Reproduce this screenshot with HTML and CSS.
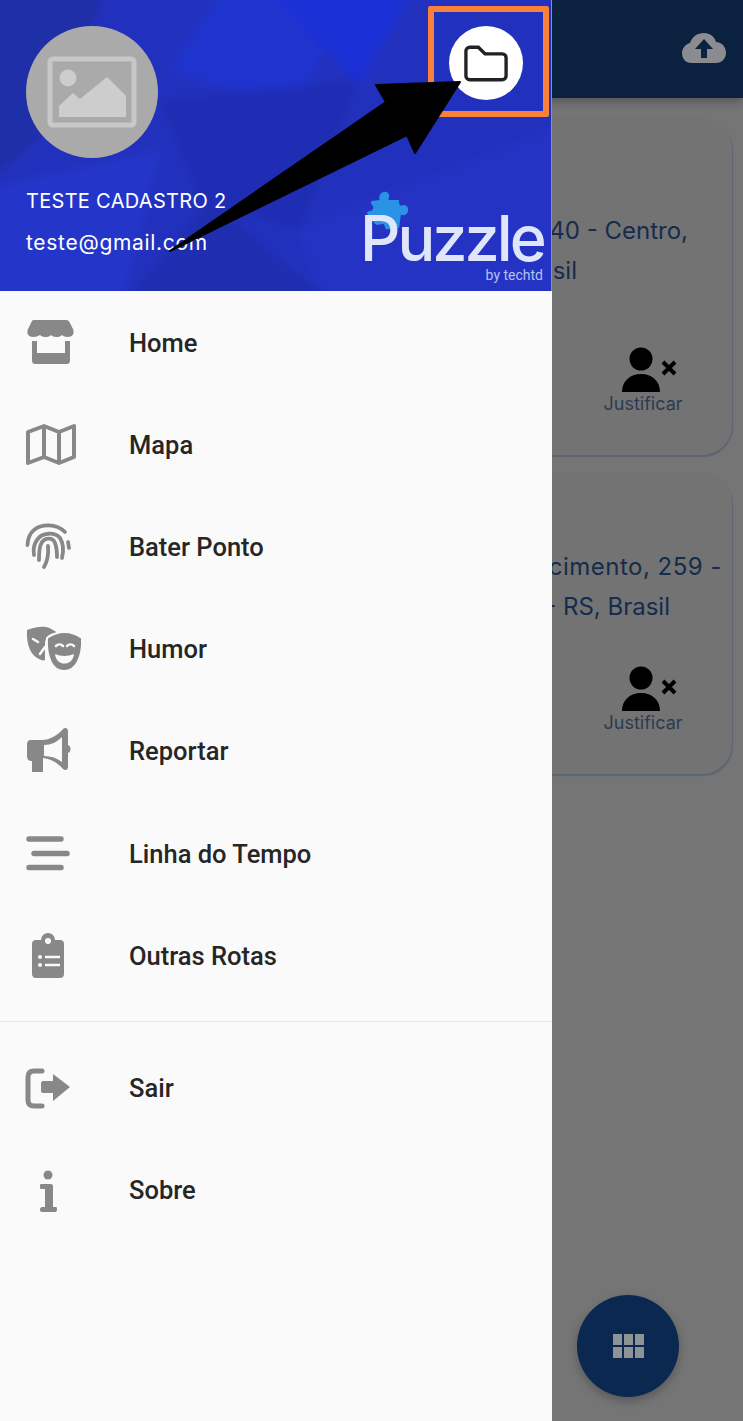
FILE: index.html
```html
<!DOCTYPE html>
<html lang="pt-BR">
<head>
    <meta charset="UTF-8">
    <meta name="viewport" content="width=device-width, initial-scale=1.0">
    <title>Puzzle</title>
    <link rel="stylesheet" href="styles.css">
</head>
<body>
    <div class="app">
        <div class="appbar">
            <svg class="cloud" viewBox="0 0 44 30">
                <path d="M22 0c6 0 11 4 12 9 6 0 10 5 10 11 0 5-4 10-10 10H9c-5 0-9-4-9-10 0-5 4-9 8-10C10 4 15 0 22 0z" fill="#8a8c8f"/>
                <path d="M22 6l9 10h-6v9h-6v-9h-6z" fill="#0a2140"/>
            </svg>
        </div>

        <div class="card card-first">
            <div class="address">
                <div class="line line-a">40 - Centro,</div>
                <div class="line line-b">sil</div>
            </div>
            <div class="justify">
                <svg class="justify-icon" viewBox="0 0 76 46">
                    <circle cx="36" cy="12" r="11.500"/>
                    <path d="M17 45c0-11 8-18 19-18s19 7 19 18z"/>
                    <path d="M58 15l12 12M70 15L58 27" class="cross"/>
                </svg>
                <span>Justificar</span>
            </div>
        </div>

        <div class="card card-second">
            <div class="address">
                <div class="line line-c">cimento, 259 -</div>
                <div class="line line-d">- RS, Brasil</div>
            </div>
            <div class="justify">
                <svg class="justify-icon" viewBox="0 0 76 46">
                    <circle cx="36" cy="12" r="11.500"/>
                    <path d="M17 45c0-11 8-18 19-18s19 7 19 18z"/>
                    <path d="M58 15l12 12M70 15L58 27" class="cross"/>
                </svg>
                <span>Justificar</span>
            </div>
        </div>

        <div class="fab">
            <div class="fab-grid">
                <i></i><i></i><i></i><i></i><i></i><i></i>
            </div>
        </div>
    </div>

    <div class="drawer">
        <div class="drawer-header">
            <svg class="header-bg" viewBox="-12 -12 576 315" preserveAspectRatio="none">
                <rect x="-20" y="-20" width="600" height="330" fill="#2231bd"/>
                <polygon points="-20,-20 110,-20 60,120 -20,190" fill="#1f2fa8"/>
                <polygon points="230,-20 350,-20 300,110 170,70" fill="#1f34cf"/>
                <polygon points="260,-20 420,-20 360,85" fill="#1b2fd6"/>
                <polygon points="160,100 360,80 300,230 200,200" fill="#1f2db4"/>
                <polygon points="-20,190 160,150 120,310 -20,310" fill="#2436c9"/>
                <polygon points="300,230 580,120 580,310 330,310" fill="#2433c4"/>
                <polygon points="120,310 210,200 340,310" fill="#1f2db0"/>
            </svg>
            <div class="profile">
                <div class="avatar">
                    <svg class="avatar-img" viewBox="0 0 90 72">
                        <rect x="3" y="3" width="84" height="66" rx="3" fill="none" stroke="#c8c8c8" stroke-width="5"/>
                        <circle cx="21" cy="22" r="8.500" fill="#cdcdcd"/>
                        <path d="M12 61V50l14-13 7 6 27-22 19 19v21z" fill="#cdcdcd"/>
                    </svg>
                </div>
                <div class="user-name">TESTE CADASTRO 2</div>
                <div class="user-mail">teste@gmail.com</div>
            </div>
            <div class="header-right">
                <div class="highlight">
                    <div class="folder-btn">
                        <svg class="folder" viewBox="0 0 46 38">
                            <path d="M2 6a4 4 0 0 1 4-4h9l7 7h18a4 4 0 0 1 4 4v19a4 4 0 0 1-4 4H6a4 4 0 0 1-4-4z"/>
                        </svg>
                    </div>
                </div>
                <div class="logo">
                    <svg class="logo-piece" viewBox="0 0 50 50">
                        <path d="M16 12c-3-8 8-12 10-6 1 3-1 4 0 6h11c0 4 0 6 3 6 6-3 10 6 4 10-2 1-4 0-5 0l-2 14-14 2c-2-3-1-6-4-6-3 0-5 2-8 0L2 26c2-3 6-1 7-5 1-3-4-4-2-8z" fill="#2b93e6"/>
                    </svg>
                    <div class="logo-name">Puzzle</div>
                    <div class="logo-by">by techtd</div>
                </div>
            </div>
        </div>

        <div class="menu">
            <div class="menu-item">
                <svg class="menu-icon" viewBox="0 0 56 56">
                    <path d="M12 5H44C46 5 47 6 48 8L51 14C53 19 50 22 46 22C43 22 41 21 40 20C38 22 36 22 34 22C32 22 30 21 29 20C27 22 25 22 23 22C21 22 19 21 18 20C16 21 14 22 11 22C7 22 4 19 6 14L9 8C10 6 10 5 12 5Z"/>
                    <path d="M10 26h5v12h28V26h5v19c0 3-1 4-4 4H14c-3 0-4-1-4-4z"/>
                </svg>
                <span>Home</span>
            </div>
            <div class="menu-item">
                <svg class="menu-icon" viewBox="0 0 56 56">
                    <path class="outline" d="M6 15l16-6 15 6 15-6v31l-15 6-15-6-16 6zM22 9v31M37 15v31"/>
                </svg>
                <span>Mapa</span>
            </div>
            <div class="menu-item">
                <svg class="menu-icon" viewBox="0 0 56 56">
                    <g class="thin">
                        <path d="M5.500 26C6 18 8 14 12 11 19 5 34 4 43 13"/>
                        <path d="M12 36C11 30 12 25 15 21 20 13 33 13 38 19 41 24 42 31 40 39"/>
                        <path d="M17 41C17 34 17 29 19 25 22 18 31 18 33 24 35 29 35 33 35 38"/>
                        <path d="M22 48C25 43 27 38 26 27"/>
                        <path d="M46 23l1 6"/>
                    </g>
                </svg>
                <span>Bater Ponto</span>
            </div>
            <div class="menu-item">
                <svg class="menu-icon" viewBox="0 0 56 56">
                    <path d="M5 9C11 7 18 5 24 6 29 7 33 10 35 12 28 12 24 15 23 21V39C21 40 19 39 17 38 10 35 4 26 5 9Z"/>
                    <path class="mask-front" d="M25 17C36 9 49 9 60 17 61 36 54 50 42 50S24 36 25 17Z"/>
                    <path class="face" d="M34 25c2-2 5-2 7 0M45 25c2-2 5-2 7 0"/>
                    <path d="M33 33c6 2.500 13 2.500 19 0-1 7-5 9.500-9.500 9.500S34 40 33 33z" fill="#fafafa"/>
                    <path class="face" d="M11 18l5 3M18 33l5-7"/>
                </svg>
                <span>Humor</span>
            </div>
            <div class="menu-item">
                <svg class="menu-icon" viewBox="0 0 56 56">
                    <path d="M9 17H20C28 17 36 12 41 6C43 4 46 5 46 8V22C48 23 48.500 24 48.500 26S48 29 46 30V44C46 47 43 48 41 46C36 40 29 36 21 35V49H10V38H9C6 38 5 35 5 33V22C5 19 6 17 9 17Z"/>
                    <path d="M22 22C29 22 35 19 40 14V39C35 35 29 33 22 33Z" fill="#fafafa"/>
                </svg>
                <span>Reportar</span>
            </div>
            <div class="menu-item">
                <svg class="menu-icon" viewBox="0 0 56 56">
                    <path class="bars" d="M7 13h32M12 27.500h33M7 41.500h32"/>
                </svg>
                <span>Linha do Tempo</span>
            </div>
            <div class="menu-item">
                <svg class="menu-icon" viewBox="0 0 56 56">
                    <path d="M14 12h5a7 7 0 0 1 14 0h5c3 0 4 2 4 4v30c0 3-2 4-4 4H14c-3 0-4-2-4-4V16c0-2 1-4 4-4z"/>
                    <circle cx="26" cy="13" r="3" fill="#fafafa"/>
                    <path class="list" d="M23 29h15M23 37h15"/>
                    <circle cx="18" cy="29" r="2" fill="#fafafa"/>
                    <circle cx="18" cy="37" r="2" fill="#fafafa"/>
                </svg>
                <span>Outras Rotas</span>
            </div>

            <div class="divider"></div>

            <div class="menu-item">
                <svg class="menu-icon" viewBox="0 0 56 56">
                    <path class="bracket" d="M20 11h-8c-4 0-6 2-6 6v23c0 4 2 6 6 6h8"/>
                    <path d="M21 21h10v-7l17 13-17 14v-8H21c-1 0-2-1-2-2v-8c0-1 1-2 2-2z"/>
                </svg>
                <span>Sair</span>
            </div>
            <div class="menu-item">
                <svg class="menu-icon" viewBox="0 0 56 56">
                    <circle cx="26" cy="13" r="4.500"/>
                    <path d="M19 22h10c1 0 2 1 2 2v21h3c1 0 1 1 1 2v1c0 1-1 2-2 2H20c-1 0-2-1-2-2v-1c0-1 1-2 2-2h3V27h-4c-1 0-1-1-1-2v-1c0-1 0-2 1-2z"/>
                </svg>
                <span>Sobre</span>
            </div>
        </div>
    </div>

    <svg class="arrow" viewBox="0 0 743 300">
        <path d="M170 251L386 102 376 85 460 82 415 153 407 135z" fill="#000" stroke="#000" stroke-width="2" stroke-linejoin="round"/>
    </svg>
</body>
</html>
```

FILE: styles.css
```css
* {
    margin: 0;
    padding: 0;
    box-sizing: border-box;
}

body {
    position: relative;
    width: 743px;
    height: 1421px;
    overflow: hidden;
    background: #757575;
    font-family: Roboto, 'Liberation Sans', sans-serif;
}

/* pagina atras do menu */
.appbar {
    height: 98px;
    background: #0a2140;
    box-shadow: 0 3px 10px rgba(0, 0, 0, 0.3);
    display: flex;
    align-items: center;
    justify-content: flex-end;
    padding-right: 17px;
}

.cloud {
    width: 44px;
    height: 30px;
    margin-bottom: 2px;
}

.card {
    width: 720px;
    margin-left: 12px;
    border-radius: 30px;
    background: #737373;
    box-shadow: 1px 2px 1px #5c6573;
    font-family: Inter, 'Noto Sans', sans-serif;
}

.card-first {
    height: 337px;
    margin-top: 20px;
    padding-top: 93px;
}

.card-second {
    height: 302px;
    margin-top: 17px;
    padding-top: 75px;
}

.address {
    color: #152c4c;
    font-size: 24px;
    line-height: 40px;
    white-space: nowrap;
    text-align: right;
}

.line-a {
    padding-right: 44px;
}

.line-b {
    padding-right: 155px;
}

.line-c {
    padding-right: 10px;
    letter-spacing: 0.5px;
}

.line-d {
    padding-right: 62px;
}

.justify {
    width: 100px;
    margin-left: 581px;
    display: flex;
    flex-direction: column;
    align-items: center;
    color: #2c3a52;
    font-size: 18px;
}

.card-first .justify {
    margin-top: 56px;
}

.card-second .justify {
    margin-top: 39px;
}

.justify-icon {
    width: 76px;
    height: 46px;
    fill: #000;
}

.justify-icon .cross {
    fill: none;
    stroke: #000;
    stroke-width: 4;
}

.fab {
    position: absolute;
    left: 577px;
    top: 1295px;
    width: 102px;
    height: 102px;
    border-radius: 50%;
    background: #0a2850;
    box-shadow: 0 4px 10px rgba(0, 0, 0, 0.25);
    display: flex;
    align-items: center;
    justify-content: center;
}

.fab-grid {
    display: grid;
    grid-template-columns: repeat(3, 9px);
    grid-template-rows: repeat(2, 11px);
    gap: 2px;
}

.fab-grid i {
    background: #8e9396;
}

/* menu lateral */
.drawer {
    position: absolute;
    left: 0;
    top: 0;
    width: 552px;
    height: 1421px;
    background: #fafafa;
}

.drawer-header {
    position: relative;
    height: 291px;
    padding: 6px 2px 0 26px;
    border-right: 1px solid #7d8ce0;
    background: #2231bd;
    display: flex;
    justify-content: space-between;
    color: #fff;
    overflow: hidden;
}

.header-bg {
    position: absolute;
    left: -12px;
    top: -12px;
    width: calc(100% + 24px);
    height: calc(100% + 24px);
    filter: blur(5px);
}

.profile {
    position: relative;
    padding-top: 20px;
    font-family: Inter, 'Noto Sans', sans-serif;
}

.avatar {
    width: 132px;
    height: 132px;
    border-radius: 50%;
    background: #aaa;
    display: flex;
    align-items: center;
    justify-content: center;
}

.avatar-img {
    width: 90px;
    height: 72px;
}

.user-name {
    margin-top: 31px;
    font-size: 20px;
    line-height: 24px;
    letter-spacing: 0.3px;
    white-space: nowrap;
}

.user-mail {
    margin-top: 18px;
    font-size: 21px;
    line-height: 24px;
    letter-spacing: 0.7px;
    white-space: nowrap;
}

.header-right {
    position: relative;
    width: 183px;
    display: flex;
    flex-direction: column;
    align-items: flex-end;
}

.highlight {
    width: 121px;
    height: 111px;
    border: 6px solid #f98039;
    border-radius: 2px;
    display: flex;
    align-items: center;
    justify-content: center;
}

.folder-btn {
    width: 74px;
    height: 74px;
    margin-left: -5px;
    margin-top: 3px;
    border-radius: 50%;
    background: #fff;
    display: flex;
    align-items: center;
    justify-content: center;
}

.folder {
    width: 44px;
    height: 37px;
    fill: none;
    stroke: #222;
    stroke-width: 3.500;
}

.logo {
    position: relative;
    width: 184px;
    margin-top: 91px;
    margin-right: 5px;
    color: #dfe6fb;
}

.logo-piece {
    position: absolute;
    left: 5px;
    top: -19px;
    width: 46px;
    height: 46px;
}

.logo-name {
    position: relative;
    font-family: Inter, sans-serif;
    font-weight: 500;
    font-size: 63px;
    line-height: 60px;
    letter-spacing: -3px;
    white-space: nowrap;
}

.logo-by {
    position: relative;
    text-align: right;
    padding-right: 1px;
    font-size: 14px;
    line-height: 14px;
    color: #b5c2ee;
}

.menu {
    padding-top: 0.500px;
}

.menu-item {
    height: 102.200px;
    padding-left: 22px;
    display: flex;
    align-items: center;
    color: #262626;
    font-size: 25.500px;
    font-weight: 500;
}

.menu-icon {
    width: 56px;
    height: 56px;
    margin-right: 51px;
    fill: #888;
    overflow: visible;
}

.menu-icon .outline,
.menu-icon .thin,
.menu-icon .bars,
.menu-icon .bracket,
.menu-icon .list,
.menu-icon .face {
    fill: none;
    stroke: #888;
}

.menu-icon .outline {
    stroke-width: 4;
    stroke-linejoin: round;
}

.menu-icon .thin {
    stroke-width: 3.800;
    stroke-linecap: round;
}

.menu-icon .bars {
    stroke-width: 5.500;
    stroke-linecap: round;
}

.menu-icon .bracket {
    stroke-width: 5;
    stroke-linecap: round;
}

.menu-icon .list {
    stroke: #fafafa;
    stroke-width: 2.500;
}

.menu-icon .face {
    stroke: #fafafa;
    stroke-width: 2.500;
    stroke-linecap: round;
}

.menu-icon .mask-front {
    stroke: #fafafa;
    stroke-width: 2;
}

.divider {
    height: 1px;
    margin: 14px 0 15px;
    background: #e8e8e8;
}

.arrow {
    position: absolute;
    left: 0;
    top: 0;
    width: 743px;
    height: 300px;
    pointer-events: none;
}
```
